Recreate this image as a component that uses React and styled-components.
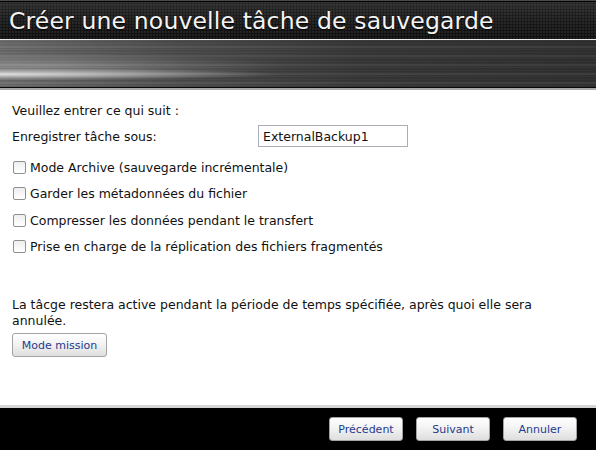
import React from 'react';
import styled, { createGlobalStyle } from 'styled-components';

const GlobalStyle = createGlobalStyle`
  html, body {
    margin: 0;
    padding: 0;
    background: #fff;
  }
  *, *::before, *::after {
    box-sizing: border-box;
  }
`;

const Window = styled.div`
  width: 596px;
  height: 450px;
  display: flex;
  flex-direction: column;
  font-family: 'DejaVu Sans', sans-serif;
  font-size: 12.5px;
  color: #111;
  overflow: hidden;
`;

const TitleBar = styled.div`
  height: 39px;
  flex-shrink: 0;
  border-top: 1px solid #4a4a4a;
  display: flex;
  align-items: center;
  padding-left: 9px;
  background:
    radial-gradient(circle at 1px 1px, rgba(255, 255, 255, 0.07) 0.8px, transparent 1.2px) 0 0 / 3px 3px,
    linear-gradient(180deg, #2a2a2a 0%, #1c1c1c 40%, #0e0e0e 100%);
  box-shadow: inset 0 1px 0 #000;
`;

const Title = styled.h1`
  margin: 0;
  margin-top: 1px;
  font-family: 'DejaVu Sans', sans-serif;
  font-weight: normal;
  font-size: 23.5px;
  letter-spacing: 0.15px;
  color: #f4f4f4;
  text-shadow: 0 1px 1px #000;
  white-space: nowrap;
`;

const Metal = styled.div`
  height: 49px;
  flex-shrink: 0;
  border-top: 1px solid #e8e8e8;
  border-bottom: 1px solid #0a0a0a;
  background:
    radial-gradient(ellipse 280px 6px at 0% 73%, rgba(255, 255, 255, 0.75), transparent),
    radial-gradient(ellipse 240px 12px at 8% 55%, rgba(255, 255, 255, 0.22), transparent),
    repeating-linear-gradient(180deg,
      rgba(255, 255, 255, 0.06) 0px,
      rgba(0, 0, 0, 0.12) 2px,
      rgba(255, 255, 255, 0.04) 3px,
      rgba(0, 0, 0, 0.08) 5px,
      rgba(255, 255, 255, 0.1) 7px,
      rgba(0, 0, 0, 0.1) 9px),
    linear-gradient(90deg, #6b6b6b 0%, #4a4a4a 30%, #353535 60%, #2d2d2d 100%);
`;

const MetalEdge = styled.div`
  height: 2px;
  flex-shrink: 0;
  background: #a8a8a8;
`;

const Content = styled.div`
  flex: 1;
  display: flex;
  flex-direction: column;
  padding: 13px 12px 0 12px;
`;

const Line = styled.div`
  line-height: 16px;
`;

const NameRow = styled.div`
  display: flex;
  align-items: center;
  margin-top: 6px;
  height: 22px;
`;

const NameLabel = styled.span`
  width: 246px;
`;

const NameInput = styled.input`
  width: 150px;
  height: 22px;
  border: 1px solid #a9adb5;
  padding: 0 4px;
  font: inherit;
  font-size: 12.5px;
  color: #111;
  outline: none;
`;

const Options = styled.div`
  margin-top: 7px;
  display: flex;
  flex-direction: column;
`;

const Option = styled.label`
  height: 26.5px;
  display: flex;
  align-items: center;
  gap: 4px;
`;

const Box = styled.span`
  width: 13px;
  height: 13px;
  margin-left: 1px;
  border: 1px solid #909090;
  border-radius: 2px;
  background: linear-gradient(180deg, #eeeeee, #ffffff);
`;

const Notice = styled.p`
  margin: 37px 0 0 0;
  line-height: 16px;
`;

const Button = styled.button`
  width: ${(p) => p.$w || 74}px;
  height: 24px;
  border: 1px solid #a3a3a3;
  border-radius: 3px;
  background: linear-gradient(180deg, #ffffff 0%, #f3f3f3 45%, #dedede 100%);
  font-family: inherit;
  font-size: 11px;
  color: #1f3a8f;
  padding: 0;
  cursor: pointer;
`;

const MissionButton = styled(Button)`
  margin-top: 4px;
  align-self: flex-start;
`;

const Footer = styled.div`
  height: 45px;
  flex-shrink: 0;
  border-top: 3px solid #d5d5d5;
  background: #000;
  display: flex;
  justify-content: flex-end;
  align-items: flex-start;
  gap: 13px;
  padding: 9px 19px 0 0;
`;

const options = [
  'Mode Archive (sauvegarde incrémentale)',
  'Garder les métadonnées du fichier',
  'Compresser les données pendant le transfert',
  'Prise en charge de la réplication des fichiers fragmentés',
];

export default function App() {
  return (
    <Window>
      <GlobalStyle />
      <TitleBar>
        <Title>Créer une nouvelle tâche de sauvegarde</Title>
      </TitleBar>
      <Metal />
      <MetalEdge />
      <Content>
        <Line>Veuillez entrer ce qui suit :</Line>
        <NameRow>
          <NameLabel>Enregistrer tâche sous:</NameLabel>
          <NameInput defaultValue="ExternalBackup1" />
        </NameRow>
        <Options>
          {options.map((o) => (
            <Option key={o}>
              <Box />
              {o}
            </Option>
          ))}
        </Options>
        <Notice>
          La tâcge restera active pendant la période de temps spécifiée, après quoi elle sera annulée.
        </Notice>
        <MissionButton $w={95}>Mode mission</MissionButton>
      </Content>
      <Footer>
        <Button>Précédent</Button>
        <Button>Suivant</Button>
        <Button>Annuler</Button>
      </Footer>
    </Window>
  );
}
